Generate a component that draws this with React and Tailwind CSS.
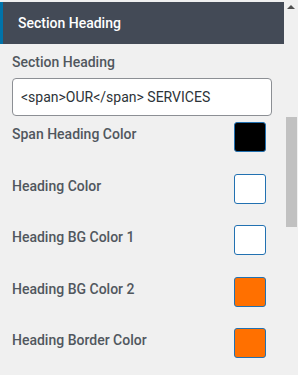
const rows = [
  { label: "Span Heading Color", color: "bg-black" },
  { label: "Heading Color", color: "bg-white" },
  { label: "Heading BG Color 1", color: "bg-white" },
  { label: "Heading BG Color 2", color: "bg-[#ff7000]" },
  { label: "Heading Border Color", color: "bg-[#ff7000]" },
]

const App = () => {
  return (
    <div className="w-[298px] h-[375px] flex bg-[#f0f0f0] overflow-hidden font-['Roboto',sans-serif]">
      {/* Panel */}
      <div className="flex-1 flex flex-col">
        <div className="mt-[2px] h-[42px] flex items-center bg-[#434a56] border-l-[3px] border-[#0073aa] pl-[15px]">
          <span className="text-[14px] font-medium text-white leading-5">Section Heading</span>
        </div>

        <div className="px-[12px] pt-[8px] flex flex-col">
          <label className="text-[14px] leading-5 font-medium text-[#50575e]">Section Heading</label>
          <div className="mt-[6px] h-[38px] bg-white border border-[#8c8f94] rounded-[4px] flex items-center px-[8px]">
            <span className="text-[14px] text-[#2c3338]">&lt;span&gt;OUR&lt;/span&gt; SERVICES</span>
          </div>

          <div className="mt-[6px] flex flex-col gap-[21.5px] pr-[6px]">
            {rows.map(row => (
              <div key={row.label} className="flex items-start justify-between">
                <span className="mt-[2px] text-[14px] leading-5 font-medium text-[#50575e]">{row.label}</span>
                <div className={`w-[32px] h-[30px] rounded-[3px] border border-[#2271b1] ${row.color}`} />
              </div>
            ))}
          </div>
        </div>
      </div>

      {/* Scrollbar */}
      <div className="w-[14px] flex flex-col items-center">
        <svg width="8" height="5" viewBox="0 0 8 5" className="mt-[5px]">
          <polygon points="4,0 8,4 0,4" fill="#505050" />
        </svg>
        <div className="mt-[107px] w-[11px] h-[110px] bg-[#c1c1c1]" />
      </div>
    </div>
  )
}

export default App
